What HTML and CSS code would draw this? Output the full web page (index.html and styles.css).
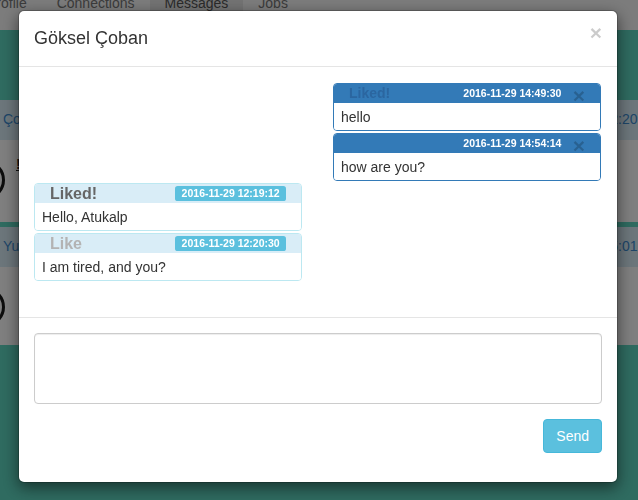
FILE: index.html
```html
<!DOCTYPE html>
<html lang="tr">
<head>
<meta charset="utf-8">
<title>Messages</title>
<link rel="stylesheet" href="styles.css">
</head>
<body>
<div class="page">
  <nav class="navbar">
    <ul class="nav">
      <li class="nav-item"><span>Profile</span></li>
      <li class="nav-item"><span>Connections</span></li>
      <li class="nav-item active"><span>Messages</span></li>
      <li class="nav-item"><span>Jobs</span></li>
    </ul>
  </nav>
  <div class="conv-list">
    <div class="conv">
      <div class="conv-head"><span class="conv-name">Çoban</span><span class="conv-time">2016-11-29 12:20:30</span></div>
      <div class="conv-body conv-body-1"><span class="avatar"></span><span class="conv-snippet">!</span></div>
    </div>
    <div class="conv">
      <div class="conv-head"><span class="conv-name">Yusuf</span><span class="conv-time">2016-11-28 15:01:12</span></div>
      <div class="conv-body conv-body-2"><span class="avatar"></span></div>
    </div>
  </div>
</div>

<div class="backdrop"></div>

<div class="modal">
  <div class="modal-dialog">
    <div class="modal-content">
      <div class="modal-header">
        <h4 class="modal-title">Göksel Çoban</h4>
        <button class="close" type="button">×</button>
      </div>
      <div class="modal-body">
        <div class="chat">
          <div class="msg msg-own">
            <div class="msg-head">
              <span class="like">Liked!</span>
              <span class="stamp">2016-11-29 14:49:30</span>
              <button class="msg-close" type="button">×</button>
            </div>
            <div class="msg-body">hello</div>
          </div>
          <div class="msg msg-own">
            <div class="msg-head">
              <span class="stamp">2016-11-29 14:54:14</span>
              <button class="msg-close" type="button">×</button>
            </div>
            <div class="msg-body">how are you?</div>
          </div>
          <div class="msg msg-other">
            <div class="msg-head">
              <span class="like like-on">Liked!</span>
              <span class="stamp">2016-11-29 12:19:12</span>
            </div>
            <div class="msg-body">Hello, Atukalp</div>
          </div>
          <div class="msg msg-other">
            <div class="msg-head">
              <span class="like like-off">Like</span>
              <span class="stamp">2016-11-29 12:20:30</span>
            </div>
            <div class="msg-body">I am tired, and you?</div>
          </div>
        </div>
      </div>
      <div class="modal-footer">
        <textarea class="form-control"></textarea>
        <button class="btn btn-info" type="button">Send</button>
      </div>
    </div>
  </div>
</div>
</body>
</html>
```
FILE: styles.css
```css
html, body {
  margin: 0;
  padding: 0;
}
body {
  font-family: "Liberation Sans", Arial, sans-serif;
  font-size: 14px;
  line-height: 1.42857;
  color: #333;
  background: #5ed6c0;
  height: 500px;
  overflow: hidden;
}

/* background page */
.navbar {
  height: 30px;
  background: #f8f8f8;
  overflow: hidden;
}
.nav {
  display: flex;
  list-style: none;
  margin: 0 0 0 -28px;
  padding: 0;
  height: 30px;
}
.nav-item {
  padding: 0 15px;
  height: 30px;
  color: #777;
}
.nav-item span {
  display: block;
  line-height: 20px;
  margin-top: -7px;
}
.nav-item.active {
  background: #e7e7e7;
  color: #555;
}
.conv-list {
  display: flex;
  flex-direction: column;
  gap: 5px;
  padding-top: 70px;
  margin: 0 -22px 0 -20px;
}
.conv {
  background: #fff;
}
.conv-head {
  height: 40px;
  display: flex;
  align-items: center;
  justify-content: space-between;
  padding: 0 3px 0 23px;
  background: #d9edf7;
  color: #3d8bd0;
}
.conv-body {
  display: flex;
  align-items: flex-start;
  padding-top: 20px;
  box-sizing: border-box;
}
.conv-body-1 { height: 82px; }
.conv-body-2 { height: 78px; }
.avatar {
  width: 40px;
  height: 40px;
  border-radius: 50%;
  border: 3px solid #1a1a1a;
  box-sizing: border-box;
  margin-left: -15px;
}
.conv-snippet {
  margin: -5px 0 0 11px;
  font-weight: bold;
  color: #1a1a1a;
  text-decoration: underline;
}

/* modal */
.backdrop {
  position: fixed;
  inset: 0;
  background: rgba(0, 0, 0, 0.5);
}
.modal {
  position: fixed;
  inset: 0;
}
.modal-dialog {
  width: 600px;
  margin: 10px 0 0 18px;
}
.modal-content {
  box-sizing: border-box;
  background: #fff;
  background-clip: padding-box;
  border: 1px solid rgba(0, 0, 0, 0.2);
  border-radius: 6px;
  box-shadow: 0 5px 15px rgba(0, 0, 0, 0.5);
}
.modal-header {
  display: flex;
  justify-content: space-between;
  align-items: flex-start;
  padding: 15px;
  border-bottom: 1px solid #e5e5e5;
}
.modal-title {
  margin: 0;
  font-size: 18px;
  font-weight: normal;
  line-height: 25px;
  color: #333;
}
.close {
  font-family: inherit;
  font-size: 21px;
  font-weight: bold;
  line-height: 1;
  color: #000;
  opacity: 0.2;
  background: none;
  border: 0;
  padding: 0;
  margin-top: -4px;
}
.modal-body {
  box-sizing: border-box;
  height: 250px;
  padding: 16px 15px 15px;
}
.chat {
  display: flex;
  flex-direction: column;
}
.msg {
  width: 268px;
  box-sizing: border-box;
  border: 1px solid;
  border-radius: 4px;
  margin-bottom: 2px;
}
.msg-own {
  align-self: flex-end;
  margin-right: 1px;
  border-color: #337ab7;
}
.msg-other {
  align-self: flex-start;
  border-color: #bce8f1;
}
.msg-head {
  height: 19px;
  display: flex;
  align-items: center;
  padding: 0 15px;
  border-radius: 3px 3px 0 0;
}
.msg-own .msg-head { background: #337ab7; }
.msg-other .msg-head { background: #d9edf7; }
.like {
  font-size: 16px;
  font-weight: bold;
  line-height: 19px;
}
.msg-own .like {
  font-size: 14px;
  color: #2b66a0;
}
.like-on { color: #666; }
.like-off { color: #b3b3b3; }
.stamp {
  margin-left: auto;
  font-size: 10.5px;
  font-weight: bold;
  line-height: 1;
  color: #fff;
  padding: 0.2em 0.6em 0.3em;
  border-radius: 0.25em;
}
.msg-own .stamp { background: #337ab7; }
.msg-other .stamp { background: #5bc0de; }
.msg-close {
  font-family: inherit;
  font-size: 21px;
  font-weight: bold;
  line-height: 19px;
  height: 19px;
  color: #000;
  opacity: 0.2;
  background: none;
  border: 0;
  padding: 0;
  margin: 2px 0 0 5px;
  align-self: flex-start;
}
.msg-body {
  padding: 4px 7px 3px;
  line-height: 20px;
  background: #fff;
  border-radius: 0 0 3px 3px;
}
.modal-footer {
  display: flex;
  flex-direction: column;
  align-items: flex-end;
  padding: 15px 15px 29px;
  border-top: 1px solid #e5e5e5;
}
.form-control {
  display: block;
  width: 100%;
  height: 71px;
  box-sizing: border-box;
  margin: 0 0 15px;
  padding: 6px 12px;
  font: inherit;
  border: 1px solid #ccc;
  border-radius: 4px;
  box-shadow: inset 0 1px 1px rgba(0, 0, 0, 0.075);
  resize: none;
}
.btn {
  font-family: inherit;
  font-size: 14px;
  line-height: 20px;
  padding: 6px 12px;
  border: 1px solid #46b8da;
  border-radius: 4px;
  background: #5bc0de;
  color: #fff;
}
```
